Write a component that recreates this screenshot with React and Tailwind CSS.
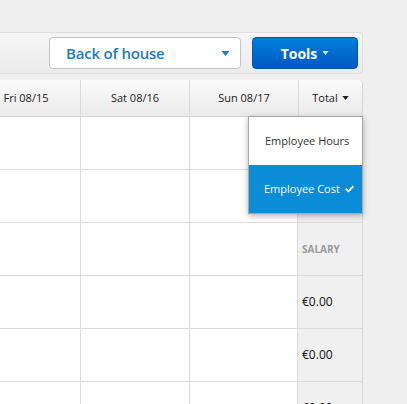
import React from 'react';

// Planilla semanal: barra de herramientas + tabla con menú "Total" abierto
const days = ['Fri 08/15', 'Sat 08/16', 'Sun 08/17'];
const totals = ['', '', 'SALARY', '€0.00', '€0.00', '€0.00'];

function Caret({ className }) {
  return (
    <svg width="8" height="5" viewBox="0 0 8 5" className={className} fill="currentColor">
      <path d="M0 0h8L4 5z" />
    </svg>
  );
}

export default function App() {
  return (
    <div
      className="relative w-[407px] h-[404px] overflow-hidden bg-[#efefef]"
      style={{ fontFamily: '"Open Sans", "DejaVu Sans", sans-serif' }}
    >
      <div className="ml-[-28px] w-[391px] pt-[32px]">
        {/* Barra superior */}
        <div className="h-[42px] flex items-center justify-end gap-[11px] pr-[4px] rounded-[4px] border border-[#dedede] bg-gradient-to-b from-[#f6f6f6] to-[#ebebeb]">
          <button className="w-[192px] h-[32px] rounded-[4px] border border-[#c4c4c4] bg-white flex items-center justify-between pl-[16px] pr-[10px]">
            <span className="text-[15px] font-semibold text-[#1a7ec6] tracking-[-0.2px]">Back of house</span>
            <Caret className="text-[#1a7ec6] w-[9px] h-[5px]" />
          </button>
          <button className="w-[106px] h-[32px] rounded-[4px] bg-gradient-to-b from-[#007fd9] to-[#0058c5] border border-[#0056b8] flex items-center justify-center gap-[5px] text-white">
            <span className="text-[14px] font-bold">Tools</span>
            <Caret className="text-[#cfe3f7] w-[7px] h-[4px]" />
          </button>
        </div>

        {/* Tabla */}
        <div className="mt-[6px] rounded-tr-[4px] border-r border-[#d6d6d6] text-[11px] text-[#222]">
          <div className="h-[37px] flex border-b border-[#d4d4d4] bg-gradient-to-b from-[#fafafa] to-[#ebebeb] rounded-tr-[4px]">
            {days.map((d) => (
              <div key={d} className="w-[109px] flex items-center justify-center border-r border-[#dadada]">{d}</div>
            ))}
            <div className="flex-1 flex items-center justify-center gap-[4px]">
              <span>Total</span>
              <Caret className="text-[#222] w-[7px] h-[4px]" />
            </div>
          </div>
          {totals.map((t, i) => (
            <div key={i} className="h-[53px] flex border-b border-[#dcdcdc]">
              <div className="w-[109px] bg-white border-r border-[#dcdcdc]" />
              <div className="w-[109px] bg-white border-r border-[#dcdcdc]" />
              <div className="w-[108px] bg-white border-r border-[#dcdcdc]" />
              <div className="flex-1 bg-[#f0f0f0] flex items-center pl-[4px]">
                {t === 'SALARY' ? (
                  <span className="text-[10px] font-bold text-[#9a9a9a]">{t}</span>
                ) : (
                  <span className="text-[12px] text-[#111]">{t}</span>
                )}
              </div>
            </div>
          ))}
        </div>
      </div>

      {/* Menú desplegable */}
      <div className="absolute left-[248px] top-[116px] w-[115px] border border-[#a8a8a8] bg-white shadow-[0_2px_6px_rgba(0,0,0,0.3)] text-[11px]">
        <div className="h-[48px] flex items-center pl-[16px] text-[#333]">Employee Hours</div>
        <div className="h-[48px] flex items-center pl-[15px] gap-[5px] bg-[#0a8cd6] text-white">
          <span>Employee Cost</span>
          <svg width="9" height="8" viewBox="0 0 9 8" fill="white">
            <path d="M0 4.3l1.4-1.4 2 2L7.6 0.6 9 2 3.4 7.6z" />
          </svg>
        </div>
      </div>
    </div>
  );
}
